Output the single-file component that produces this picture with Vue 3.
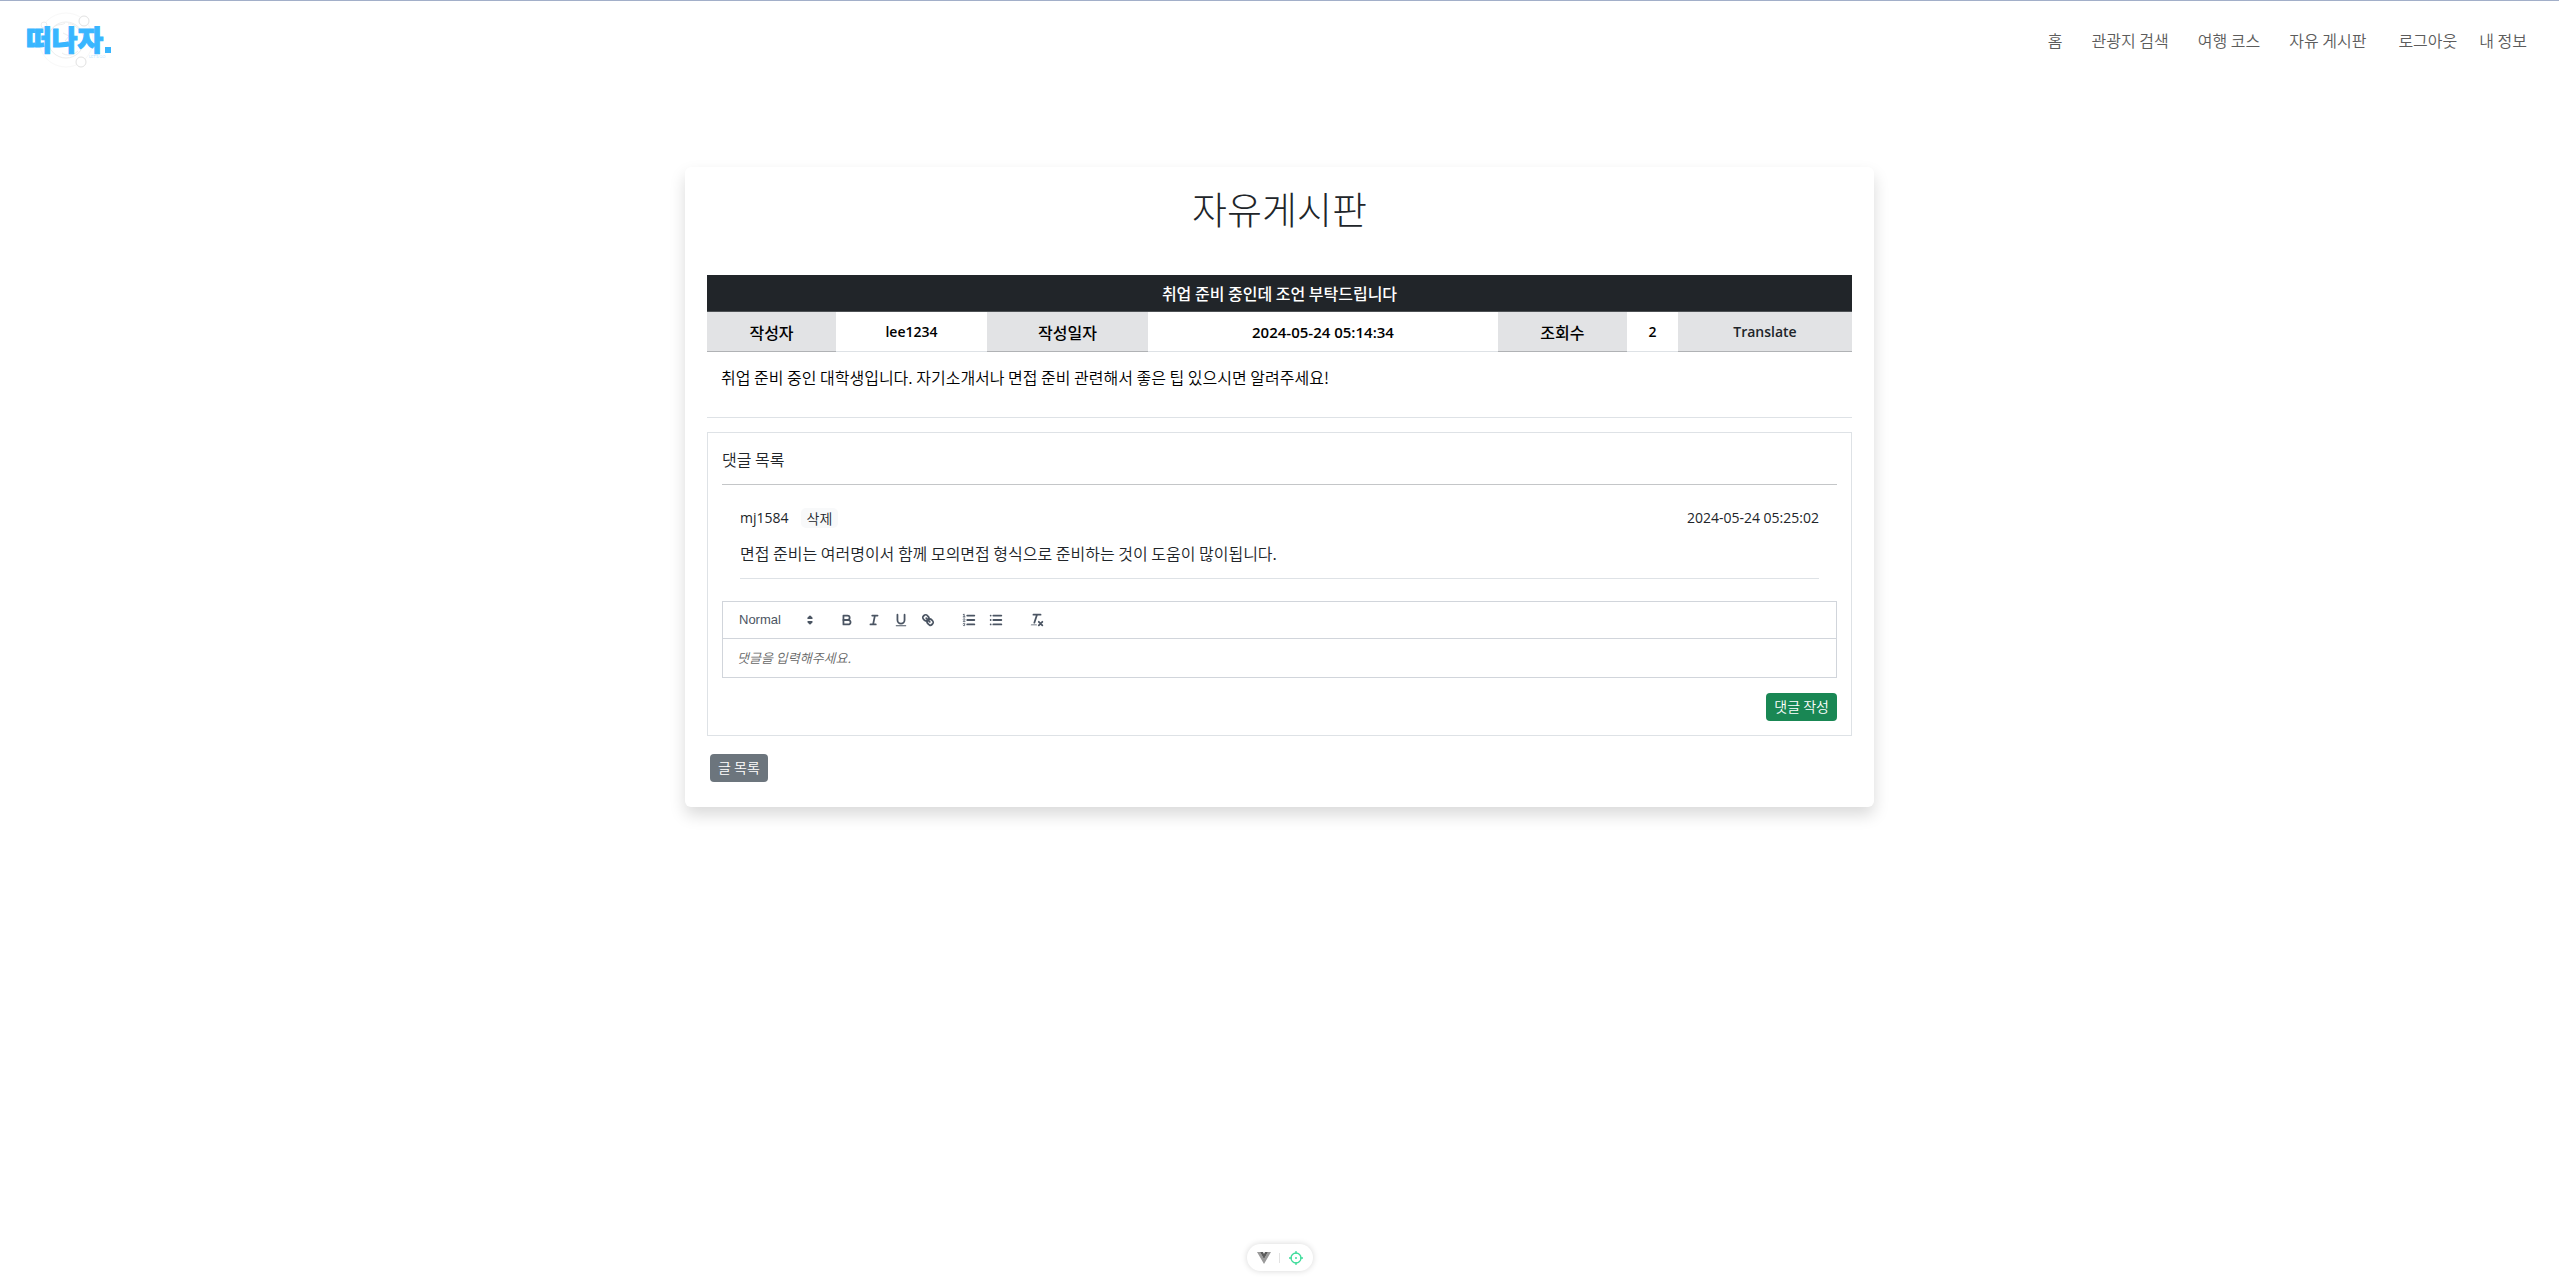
<script setup>
import { ref } from 'vue'

const comment = ref('')
const format = ref('Normal')

const menu = ['홈', '관광지 검색', '여행 코스', '자유 게시판']
const account = ['로그아웃', '내 정보']

const comments = [
  {
    id: 1,
    user: 'mj1584',
    date: '2024-05-24 05:25:02',
    text: '면접 준비는 여러명이서 함께 모의면접 형식으로 준비하는 것이 도움이 많이됩니다.'
  }
]
</script>

<template>
  <div class="page">
    <header class="topbar">
      <a href="#" class="logo" aria-label="떠나자.">
        <svg width="96" height="64" viewBox="0 0 96 64">
          <g fill="none" stroke="#ededed" stroke-width="1">
            <circle cx="50" cy="32" r="27" stroke="#f8f8f8" />
            <circle cx="50" cy="32" r="18" />
            <path d="M37 20c4-5 8-2 12-5M52 16c5-1 8 3 12 6M47 25l6 3-4 5M46 45c4 3 11 3 16-2" />
            <circle cx="68" cy="13" r="5" fill="#fff" stroke="#e2e2e2" />
            <circle cx="28" cy="17" r="3" fill="#fff" />
            <circle cx="65" cy="54" r="5" fill="#fff" stroke="#e2e2e2" />
          </g>
          <text class="logo-word" x="10" y="43">떠나자</text>
          <rect x="89" y="39" width="6" height="6" fill="#38b6ff" />
          <text class="logo-tag" x="73" y="50">LET'S GO</text>
        </svg>
      </a>
      <nav class="nav">
        <ul class="menu">
          <li v-for="item in menu" :key="item"><a href="#">{{ item }}</a></li>
        </ul>
        <ul class="menu account">
          <li v-for="item in account" :key="item"><a href="#">{{ item }}</a></li>
        </ul>
      </nav>
    </header>

    <main class="card">
      <h1>자유게시판</h1>

      <table class="post">
        <colgroup>
          <col class="c-label" /><col class="c-user" /><col class="c-date-label" /><col class="c-date" />
          <col class="c-label" /><col class="c-hits" /><col class="c-action" />
        </colgroup>
        <thead>
          <tr><th colspan="7">취업 준비 중인데 조언 부탁드립니다</th></tr>
        </thead>
        <tbody>
          <tr class="meta">
            <th class="shade">작성자</th>
            <th class="latin">lee1234</th>
            <th class="shade">작성일자</th>
            <th class="latin stamp">2024-05-24 05:14:34</th>
            <th class="shade">조회수</th>
            <th class="latin">2</th>
            <th class="shade latin"><button type="button" class="translate">Translate</button></th>
          </tr>
          <tr class="body">
            <td colspan="7">취업 준비 중인 대학생입니다. 자기소개서나 면접 준비 관련해서 좋은 팁 있으시면 알려주세요!</td>
          </tr>
        </tbody>
      </table>

      <section class="comments">
        <h2>댓글 목록</h2>
        <article v-for="c in comments" :key="c.id" class="comment">
          <div class="comment-head">
            <span class="latin">{{ c.user }}</span>
            <button type="button" class="remove">삭제</button>
            <time class="latin">{{ c.date }}</time>
          </div>
          <p>{{ c.text }}</p>
        </article>

        <form class="editor-form" @submit.prevent>
          <div class="editor">
            <div class="toolbar">
              <div class="picker">
                <select v-model="format" aria-label="Format">
                  <option>Normal</option>
                  <option>Heading</option>
                  <option>Subheading</option>
                </select>
                <svg viewBox="0 0 18 18" class="solid"><polygon points="7 11 9 13 11 11 7 11" /><polygon points="7 7 9 5 11 7 7 7" /></svg>
              </div>
              <div class="group">
                <button type="button" aria-label="Bold">
                  <svg viewBox="0 0 18 18">
                    <path d="M5,4H9.5A2.5,2.5,0,0,1,12,6.5v0A2.5,2.5,0,0,1,9.5,9H5V4Z" />
                    <path d="M5,9h5.5A2.5,2.5,0,0,1,13,11.5v0A2.5,2.5,0,0,1,10.5,14H5V9Z" />
                  </svg>
                </button>
                <button type="button" aria-label="Italic">
                  <svg viewBox="0 0 18 18"><path d="M7,4H13M5,14H11M8,14L10,4" /></svg>
                </button>
                <button type="button" aria-label="Underline">
                  <svg viewBox="0 0 18 18">
                    <path d="M5,3V9a4.012,4.012,0,0,0,4,4H9a4.012,4.012,0,0,0,4-4V3" />
                    <rect class="fill" height="1" rx="0.5" width="12" x="3" y="15" />
                  </svg>
                </button>
                <button type="button" aria-label="Link">
                  <svg viewBox="0 0 18 18">
                    <path d="M7,7L11,11" />
                    <path d="M8.9,4.577a3.476,3.476,0,0,1,.36,4.679A3.476,3.476,0,0,1,4.577,8.9C3.185,7.5,2.035,6.4,4.217,4.217S7.5,3.185,8.9,4.577Z" />
                    <path d="M13.423,9.1a3.476,3.476,0,0,0-4.679-.36,3.476,3.476,0,0,0,.36,4.679c1.392,1.392,2.5,2.542,4.679.36S14.815,10.5,13.423,9.1Z" />
                  </svg>
                </button>
              </div>
              <div class="group">
                <button type="button" aria-label="Numbered list">
                  <svg viewBox="0 0 18 18">
                    <path d="M7,4H15M7,9H15M7,14H15" />
                    <path class="thin" d="M2.5,5.5H4.5" />
                    <path class="fill" d="M3.5,6A0.5,0.5,0,0,1,3,5.5V3.085l-0.276.138A0.5,0.5,0,0,1,2.053,3c-0.124-.247-0.023-0.324.224-0.447l1-.5A0.5,0.5,0,0,1,4,2.5v3A0.5,0.5,0,0,1,3.5,6Z" />
                    <path class="thin" d="M4.5,10.5h-2c0-.234,1.85-1.076,1.85-2.234A0.959,0.959,0,0,0,2.5,8.156" />
                    <path class="thin" d="M2.5,14.846a0.959,0.959,0,0,0,1.85-.109A0.7,0.7,0,0,0,3.75,14a0.688,0.688,0,0,0,.6-0.736,0.959,0.959,0,0,0-1.85-.109" />
                  </svg>
                </button>
                <button type="button" aria-label="Bulleted list">
                  <svg viewBox="0 0 18 18"><path d="M6,4H15M6,9H15M6,14H15M3,4H3M3,9H3M3,14H3" /></svg>
                </button>
              </div>
              <div class="group">
                <button type="button" aria-label="Clear formatting">
                  <svg viewBox="0 0 18 18">
                    <path d="M5,3H13M6,12L9,3M11,11L15,15M15,11L11,15" />
                    <rect class="fill" height="1" rx="0.5" width="7" x="2" y="14" />
                  </svg>
                </button>
              </div>
            </div>
            <input v-model="comment" type="text" class="editor-input" aria-label="댓글" placeholder="댓글을 입력해주세요." />
          </div>
          <button type="submit" class="btn green">댓글 작성</button>
        </form>
      </section>

      <button type="button" class="btn grey">글 목록</button>
    </main>

    <div class="devtools">
      <button type="button" aria-label="Toggle devtools">
        <svg width="14" height="12" viewBox="0 0 14 12">
          <path d="M0 0h3l4 7 4-7h3L7 12z" fill="#9a9a9a" />
          <path d="M3 0h3l1 2 1-2h3L7 7z" fill="#5c5c5c" />
        </svg>
      </button>
      <i></i>
      <button type="button" aria-label="Inspect component">
        <svg width="14" height="14" viewBox="0 0 14 14" fill="none" stroke="#3fdc9b" stroke-width="1.3">
          <circle cx="7" cy="7" r="5" />
          <path d="M7 0v3M7 11v3M0 7h3M11 7h3" />
          <circle cx="7" cy="7" r="1" fill="#3fdc9b" stroke="none" />
        </svg>
      </button>
    </div>
  </div>
</template>

<style>
body {
  margin: 0;
  background: #fff;
}
</style>

<style scoped>
* {
  box-sizing: border-box;
}

.page {
  min-height: 100vh;
  padding-bottom: 40px;
  border-top: 1px solid #a2afc9;
  color: #212529;
  font-family: "Noto Sans CJK KR", sans-serif;
  font-size: 16px;
  font-weight: 350;
  line-height: 24px;
}

button {
  margin: 0;
  padding: 0;
  border: 0;
  background: none;
  color: inherit;
  font: inherit;
  cursor: pointer;
}

.latin {
  font-family: "Open Sans", "Noto Sans CJK KR", sans-serif;
  font-size: 14px;
}

.topbar {
  display: flex;
  align-items: center;
  justify-content: space-between;
  height: 78px;
  padding: 0 32px 0 16px;
}

.logo svg {
  display: block;
}

.logo-word {
  fill: #38b6ff;
  stroke: #38b6ff;
  stroke-width: 1px;
  font-size: 28px;
  font-weight: 900;
}

.logo-tag {
  fill: #8fd4fb;
  font-family: "Open Sans", sans-serif;
  font-size: 4px;
}

.nav,
.menu {
  display: flex;
}

.nav {
  gap: 32px;
}

.menu {
  gap: 29px;
  margin: 0;
  padding: 0;
  list-style: none;
}

.menu.account {
  gap: 22px;
}

.menu a {
  color: #5c5c5c;
  text-decoration: none;
}

.card {
  max-width: 1189px;
  margin: 88px auto 0;
  padding: 22px;
  border-radius: 6px;
  background: #fff;
  box-shadow: 0 8px 16px rgba(0, 0, 0, 0.15);
}

h1 {
  margin: 0 0 48px;
  font-size: 38px;
  font-weight: 300;
  line-height: 38px;
  text-align: center;
}

.post {
  width: 100%;
  border-collapse: separate;
  border-spacing: 0;
  table-layout: fixed;
  color: #000;
}

.c-label { width: 129px; }
.c-user { width: 151px; }
.c-date-label { width: 161px; }
.c-hits { width: 51px; }
.c-action { width: 174px; }

.post th,
.post td {
  padding: 0;
  border-bottom: 1px solid #dee2e6;
}

.post th {
  font-weight: 500;
}

.post thead th {
  height: 37px;
  border-bottom-color: #4d5154;
  background: #212529;
  color: #fff;
}

.meta th {
  height: 40px;
}

.post .latin {
  font-weight: 600;
}

.post .stamp {
  font-size: 15px;
}

.post .shade {
  border-bottom-color: #b0b2b5;
  background: #e2e3e5;
}

.translate {
  color: #212529;
}

.post .body td {
  height: 66px;
  padding: 13px 14px 0;
  vertical-align: top;
}

.comments {
  margin-top: 14px;
  padding: 14px;
  border: 1px solid #dee2e6;
}

h2 {
  margin: 0;
  padding-bottom: 13px;
  border-bottom: 1px solid #c4c6c8;
  font-size: 16px;
  font-weight: 350;
  line-height: 24px;
}

.comment {
  margin: 21px 18px 0;
  border-bottom: 1px solid #dee2e6;
}

.comment-head {
  display: flex;
  align-items: center;
}

.comment-head .latin {
  font-weight: 400;
}

.comment-head time {
  margin-left: auto;
}

.remove {
  margin-left: 12px;
  padding: 0 6px;
  border-radius: 5px;
  background: #f8f9fa;
  font-size: 14px;
  line-height: 20px;
}

.comment p {
  margin: 11px 0 13px;
}

.editor-form {
  display: flex;
  flex-direction: column;
  gap: 15px;
  margin-top: 22px;
}

.editor {
  border: 1px solid #d1d5db;
}

.toolbar {
  display: flex;
  align-items: center;
  height: 36px;
  padding: 0 8px;
  color: #4b5563;
}

.picker {
  display: grid;
  align-items: center;
  width: 87px;
  margin-right: 15px;
}

.picker select,
.picker svg {
  grid-area: 1 / 1;
}

.picker select {
  width: 100%;
  height: 22px;
  padding: 0 8px 2px;
  border: 0;
  background: none;
  appearance: none;
  color: inherit;
  font-family: "Liberation Sans", sans-serif;
  font-size: 13px;
}

.picker svg {
  justify-self: end;
  pointer-events: none;
}

.group {
  display: flex;
  margin-right: 14px;
}

.group button {
  display: grid;
  place-items: center;
  width: 27px;
  height: 22px;
}

.toolbar svg {
  width: 16px;
  height: 16px;
  fill: none;
  stroke: currentColor;
  stroke-width: 2;
  stroke-linecap: round;
  stroke-linejoin: round;
}

.toolbar .solid {
  fill: currentColor;
}

.toolbar .thin {
  stroke-width: 1;
}

.toolbar .fill {
  fill: currentColor;
  stroke: none;
}

.editor-input {
  display: block;
  width: 100%;
  height: 39px;
  padding: 0 14px 2px;
  border: 0;
  border-top: 1px solid #d1d5db;
  outline: none;
  background: none;
  font-family: inherit;
  font-size: 13px;
  font-weight: 350;
}

.editor-input::placeholder {
  color: #666;
  font-style: italic;
  opacity: 1;
}

.btn {
  height: 28px;
  padding: 0 8px 3px;
  border-radius: 4px;
  color: #fff;
  font-size: 14px;
  line-height: 24px;
}

.btn.green {
  align-self: flex-end;
  background: #198754;
}

.btn.grey {
  display: block;
  margin: 18px 0 3px 3px;
  background: #6c757d;
}

.devtools {
  position: fixed;
  bottom: 8px;
  left: 50%;
  display: flex;
  align-items: center;
  justify-content: space-between;
  width: 66px;
  height: 27px;
  padding: 0 10px;
  border-radius: 14px;
  background: #fff;
  box-shadow: 0 0 6px rgba(0, 0, 0, 0.16);
  transform: translateX(-50%);
}

.devtools button {
  display: grid;
  place-items: center;
}

.devtools i {
  width: 1px;
  height: 10px;
  background: #e2e2e2;
}
</style>
